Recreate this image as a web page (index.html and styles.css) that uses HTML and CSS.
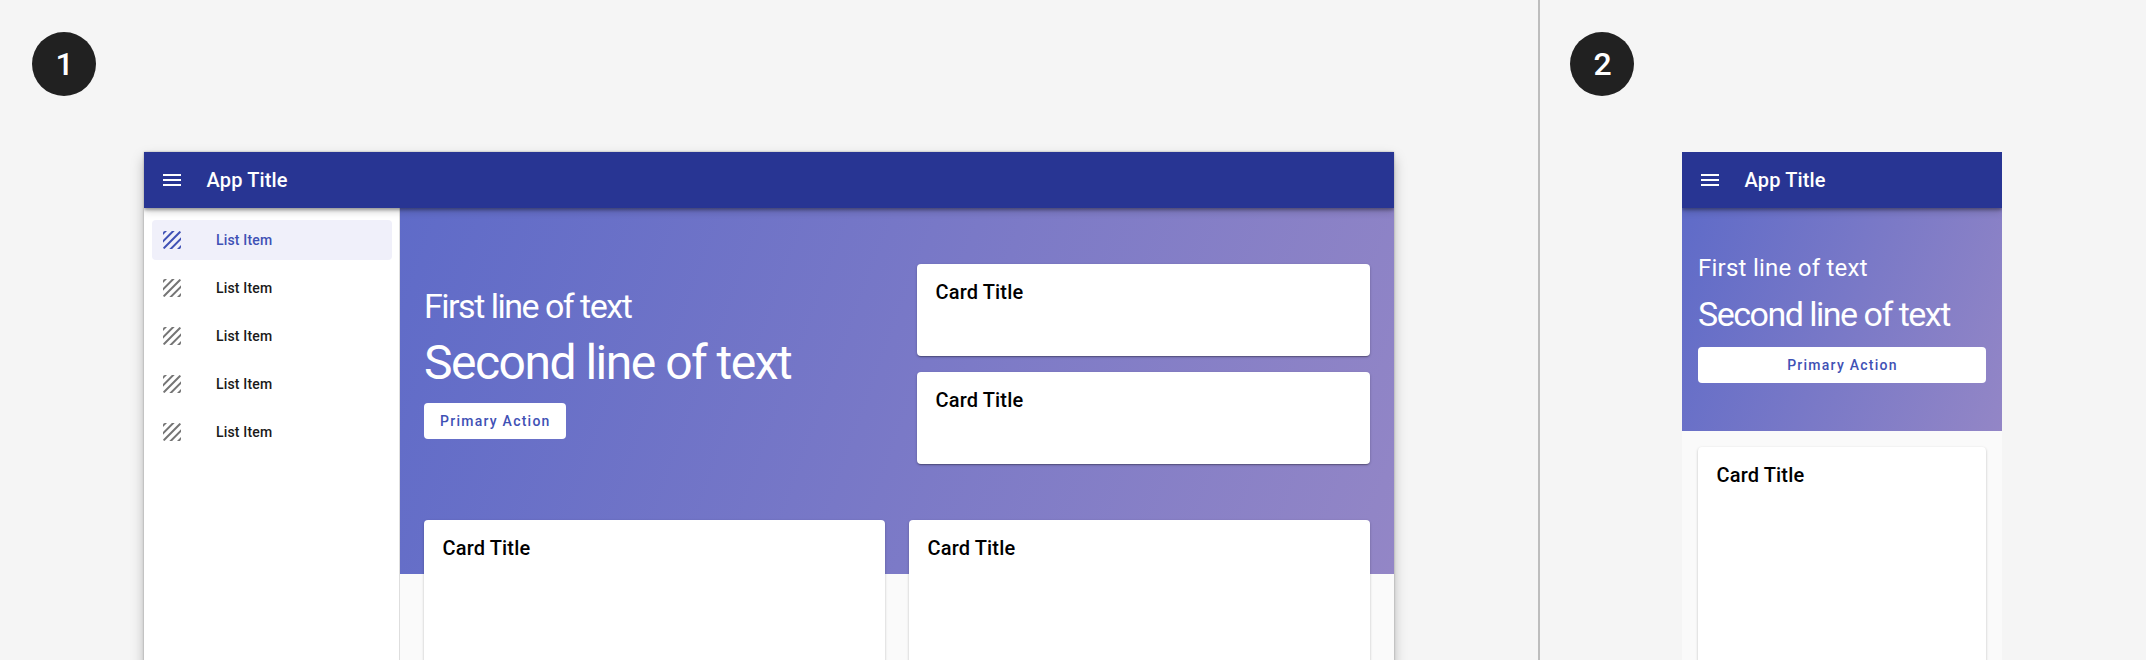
FILE: index.html
```
<!DOCTYPE html>
<html lang="en">
<head>
<meta charset="utf-8">
<title>App layouts</title>
<link rel="stylesheet" href="styles.css">
</head>
<body>
<svg width="0" height="0" class="sprite" aria-hidden="true">
  <symbol id="menu" viewBox="0 0 24 24"><path d="M3 18h18v-2H3v2zm0-5h18v-2H3v2zm0-7v2h18V6H3z"/></symbol>
  <symbol id="texture" viewBox="0 0 24 24"><path d="M19.51 3.08L3.08 19.51c.09.34.27.65.51.9.25.24.56.42.9.51L20.93 4.49c-.19-.69-.73-1.23-1.42-1.41zM11.88 3L3 11.88v2.83L14.71 3h-2.83zM5 3c-1.1 0-2 .9-2 2v2l4-4H5zm14 18c.55 0 1.05-.22 1.41-.59.37-.36.59-.86.59-1.41v-2l-4 4h2zm-9.71 0h2.83L21 12.12V9.29L9.29 21z"/></symbol>
</svg>
<main class="board">
  <section class="panel panel-desktop">
    <div class="badge">1</div>
    <div class="window window-desktop">
      <header class="app-bar">
        <svg class="icon"><use href="#menu"/></svg>
        <span class="app-title">App Title</span>
      </header>
      <div class="body">
        <nav class="drawer">
          <a class="item active"><svg class="icon"><use href="#texture"/></svg><span>List Item</span></a>
          <a class="item"><svg class="icon"><use href="#texture"/></svg><span>List Item</span></a>
          <a class="item"><svg class="icon"><use href="#texture"/></svg><span>List Item</span></a>
          <a class="item"><svg class="icon"><use href="#texture"/></svg><span>List Item</span></a>
          <a class="item"><svg class="icon"><use href="#texture"/></svg><span>List Item</span></a>
        </nav>
        <div class="content">
          <div class="hero">
            <div class="intro">
              <p class="line-one">First line of text</p>
              <p class="line-two">Second line of text</p>
              <button class="button">Primary Action</button>
            </div>
            <div class="side-cards">
              <article class="card"><h2>Card Title</h2></article>
              <article class="card"><h2>Card Title</h2></article>
            </div>
          </div>
          <div class="main-cards">
            <article class="card"><h2>Card Title</h2></article>
            <article class="card"><h2>Card Title</h2></article>
          </div>
        </div>
      </div>
    </div>
  </section>
  <section class="panel panel-mobile">
    <div class="badge">2</div>
    <div class="window window-mobile">
      <header class="app-bar">
        <svg class="icon"><use href="#menu"/></svg>
        <span class="app-title">App Title</span>
      </header>
      <div class="hero">
        <p class="line-one">First line of text</p>
        <p class="line-two">Second line of text</p>
        <button class="button">Primary Action</button>
      </div>
      <div class="main-cards">
        <article class="card"><h2>Card Title</h2></article>
      </div>
    </div>
  </section>
</main>
</body>
</html>
```

FILE: styles.css
```
* { box-sizing: border-box; }
html, body { margin: 0; height: 100%; overflow: hidden; }
body { font-family: Roboto, "Liberation Sans", sans-serif; background: #f5f5f5; color: #000; }
p, h2 { margin: 0; font-weight: 400; }

.sprite { display: block; width: 0; height: 0; }
.board { display: grid; grid-template-columns: 1538px 1fr; height: 660px; overflow: hidden; }
.panel { padding-top: 32px; overflow: hidden; height: 660px; }
.panel-mobile { border-left: 2px solid #bdbdbd; }

.badge {
  width: 64px; height: 64px; margin: 0 0 56px 32px; padding-left: 1px;
  border-radius: 50%; background: #212121; color: #fff;
  display: flex; align-items: center; justify-content: center;
  font-size: 32px; font-weight: 500; line-height: 64px;
}
.panel-mobile .badge { margin-left: 30px; }

.window { display: flex; flex-direction: column; height: 680px; background: #fafafa; }
.window-desktop { width: 1250px; margin-left: 144px; box-shadow: 0 0 2px rgba(0,0,0,.28), 0 6px 12px rgba(0,0,0,.26); }
.window-mobile { width: 320px; margin-left: 142px; overflow: hidden; }

.icon { width: 24px; height: 24px; fill: currentColor; flex: none; }
.app-bar {
  position: relative; z-index: 2; flex: none; height: 56px; padding-left: 16px;
  display: flex; align-items: center; gap: 22.5px;
  background: #283593; color: #fff;
  box-shadow: 0 2px 3px rgba(0,0,0,.3), 0 3px 8px rgba(0,0,0,.2);
}
.window-desktop .app-bar { clip-path: inset(0 0 -16px 0); }
.app-title { font-size: 20px; font-weight: 500; line-height: 24px; letter-spacing: .15px; }

.body { display: flex; flex: 1; }
.drawer {
  width: 256px; padding: 12px 7px 0 8px; border-right: 1px solid #dedede; background: #fff;
  display: flex; flex-direction: column; gap: 8px;
}
.item {
  height: 40px; padding-left: 8px; border-radius: 4px;
  display: flex; align-items: center; gap: 32px;
  font-size: 14px; font-weight: 500; line-height: 20px; letter-spacing: .16px; color: #1a1a1a;
}
.item .icon { color: #757575; }
.item.active, .item.active .icon { color: #3f51b5; }
.item.active { background: #f0f0fa; }

.content { flex: 1; display: flex; flex-direction: column; }
.hero { background: linear-gradient(110deg, #5f6bc8, #9386c6); color: #fff; }
.content .hero { height: 366px; padding: 0 24px; display: flex; justify-content: space-between; }
.intro { padding-top: 78px; }
.intro .line-one { font-size: 34px; line-height: 40px; letter-spacing: -1.5px; }
.intro .line-two { margin: 13px 0 16px; font-size: 48px; line-height: 48px; letter-spacing: -1.5px; }
.intro .button { width: 142px; }
.button {
  display: block; height: 36px; padding: 0 0 0 16px; border: 0; border-radius: 4px; text-align: left;
  background: #fff; color: #3f51b5; font: 500 14px/36px Roboto, sans-serif; letter-spacing: 1.25px;
  white-space: nowrap;
}
.side-cards { width: 453px; padding-top: 56px; display: flex; flex-direction: column; gap: 16px; }
.card {
  background: #fff; border-radius: 4px; padding: 16px 18px;
  box-shadow: 0 1px 1px rgba(0,0,0,.14), 0 2px 1px -1px rgba(0,0,0,.12), 0 1px 3px rgba(0,0,0,.2);
}
.card h2 { padding-left: .5px; font-size: 20px; font-weight: 500; line-height: 24px; letter-spacing: .15px; color: #000; }
.side-cards .card { height: 92px; }
.content .main-cards { margin: -54px 24px 0; display: grid; grid-template-columns: 1fr 1fr; gap: 24px; flex: 1; }

.window-mobile .hero { height: 223px; padding: 44px 16px 0; }
.window-mobile .line-one { font-size: 24px; line-height: 32px; letter-spacing: .25px; }
.window-mobile .line-two { margin: 10px 0 13px; font-size: 34px; line-height: 40px; letter-spacing: -1.5px; }
.window-mobile .button { width: 100%; padding: 0 0 0 1px; text-align: center; }
.window-mobile .main-cards { padding: 16px 16px 0; flex: 1; display: grid; }
```
